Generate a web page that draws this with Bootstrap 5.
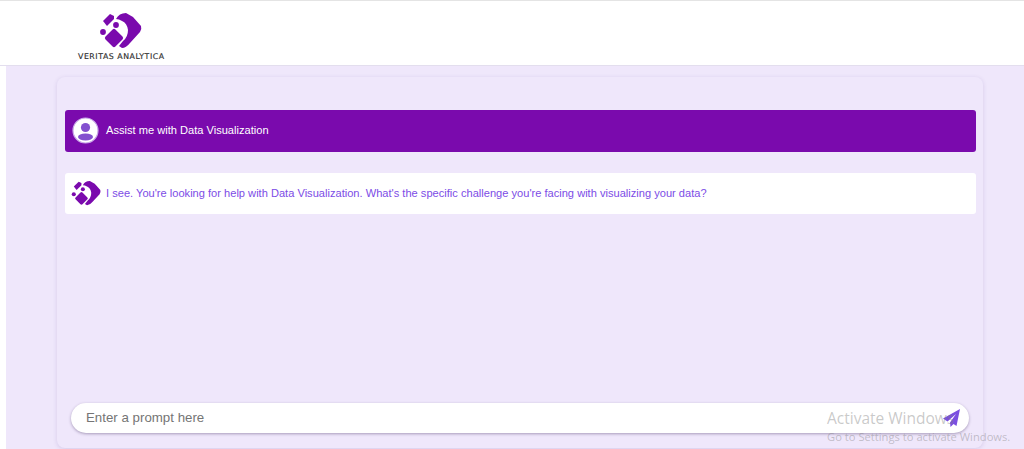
<!DOCTYPE html>
<html lang="en">
<head>
<meta charset="utf-8">
<title>Veritas Analytica</title>
<link href="https://cdn.jsdelivr.net/npm/bootstrap@5.3.0/dist/css/bootstrap.min.css" rel="stylesheet">
<style>
html,body{height:449px;overflow:hidden}
body{background:#fff;font-family:"Liberation Sans",Arial,sans-serif;position:relative}
.top-bar{height:66px;border-top:1px solid #e4e4e4;border-bottom:1px solid #e3deee;padding-left:78px;background:#fff}
.logo-box{width:87px}
.logo-mark{width:50px;height:42px;margin:9px 0 0 18px}
.logo-name{font-family:"DejaVu Sans",sans-serif;font-size:7.8px;line-height:10px;color:#2e2e2e;letter-spacing:.55px;white-space:nowrap;-webkit-text-stroke:.15px #2e2e2e}
.page-area{margin-left:6px;height:383px;background:#efe7fb;padding:11px 41px 0 51px}
.chat-panel{height:371px;background:#efe7fb;border-radius:8px;box-shadow:0 1px 4px rgba(90,60,140,.17);padding:33px 7px 15px 8px}
.msg-row{height:42px;border-radius:3px;font-size:11.1px}
.msg-user{background:#7a0aad;color:#fff;padding:0 0 1px 7px;gap:7px}
.msg-bot{background:#fff;color:#7c4ce6;margin-top:21px;height:41px;padding-left:6px;gap:5px}
.avatar-bot{width:30px;height:29px}
.prompt-wrap{margin:0 7px 0 6px;height:30px;background:#fff;border-radius:15px;box-shadow:0 1px 3px rgba(60,40,90,.4);padding:0 9px 0 15px}
.prompt-input{border:0;outline:0;width:100%;padding:0;font-size:13.3px;background:transparent;color:#333}
.prompt-input::placeholder{color:#757575;opacity:1}
.win-mark{position:absolute;left:827px;top:408px;font-family:"Open Sans","Noto Sans",sans-serif;color:rgba(125,125,125,.42);white-space:nowrap;pointer-events:none}
.win-title{font-size:15.5px;line-height:21px}
.win-sub{font-size:11.2px;line-height:15px}
</style>
</head>
<body>
<svg class="d-none" aria-hidden="true">
  <symbol id="brand-mark" viewBox="0 0 50 42" preserveAspectRatio="none">
    <path fill="#7a0aad" d="M20 9 Q23 3 30 3 L37 7 L45 16 Q46 19 44 22 L34 33 Q30 38 26 38 L23 36 L27 31 Q32 27 32 20 Q31 13 26 11 Q23 9 20 9Z"/>
    <path fill="#7a0aad" d="M7 11 L14 4 L18 6 L18 9 L11 16Z"/>
    <circle cx="20" cy="15" r="2.9" fill="#7a0aad"/>
    <circle cx="7" cy="22" r="2.9" fill="#7a0aad"/>
    <rect x="11" y="21" width="14" height="14" rx="2" transform="rotate(45 18 28)" fill="#7a0aad"/>
  </symbol>
</svg>
<header class="top-bar d-flex">
  <div class="logo-box d-flex flex-column">
    <svg class="logo-mark d-block" aria-hidden="true"><use href="#brand-mark"/></svg>
    <div class="logo-name">VERITAS ANALYTICA</div>
  </div>
</header>
<main class="page-area">
  <section class="chat-panel d-flex flex-column">
    <div class="msg-row msg-user d-flex align-items-center">
      <svg width="27" height="27" viewBox="0 0 27 27" aria-hidden="true">
        <circle cx="13.5" cy="13.5" r="12.5" fill="#fff" stroke="#c9a8e8" stroke-width="1.2"/>
        <circle cx="13.5" cy="10.5" r="4.6" fill="#8350cf"/>
        <ellipse cx="13.5" cy="20" rx="7.5" ry="3.4" fill="#8350cf"/>
      </svg>
      <span>Assist me with Data Visualization</span>
    </div>
    <div class="msg-row msg-bot d-flex align-items-center">
      <svg class="avatar-bot" viewBox="3 3 43 36" aria-hidden="true"><use href="#brand-mark" width="50" height="42"/></svg>
      <span>I see. You're looking for help with Data Visualization. What's the specific challenge you're facing with visualizing your data?</span>
    </div>
    <div class="prompt-wrap d-flex align-items-center mt-auto">
      <input class="prompt-input" type="text" placeholder="Enter a prompt here" aria-label="Enter a prompt here">
      <svg class="flex-shrink-0" width="17" height="18" viewBox="0 0 17 18" aria-hidden="true">
        <path fill="#7b4fe0" d="M17 0 L0 9.5 L4.5 12.5 L13 5 L7 13.5 L7.5 18 L10.5 15 L13.5 17Z"/>
      </svg>
    </div>
  </section>
</main>
<div class="win-mark">
  <div class="win-title">Activate Windows</div>
  <div class="win-sub">Go to Settings to activate Windows.</div>
</div>
<script src="https://cdn.jsdelivr.net/npm/bootstrap@5.3.0/dist/js/bootstrap.bundle.min.js"></script>
</body>
</html>
